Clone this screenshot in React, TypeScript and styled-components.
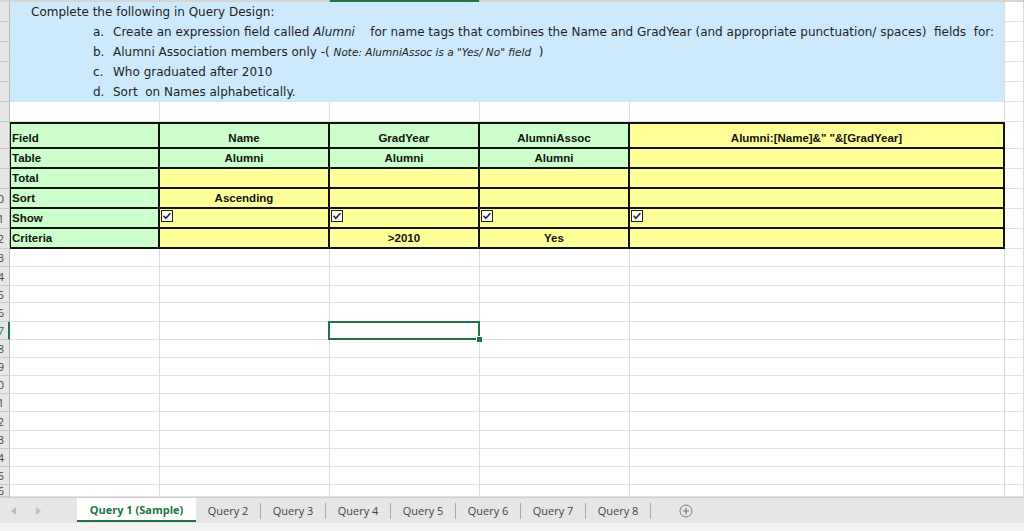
import React from 'react';
import styled, { createGlobalStyle, css } from 'styled-components';

const GRID_LINE = '#dadada';
const ROW_LINE = '#e1e1e1';
const EXCEL_GREEN = '#217346';
const INK = '#111';

// row 0 is the scrolled-away column header, rows 1..26 are sheet rows
const ROW_HEIGHTS = [2, 20, 20, 20, 20, 20, 20, 27, 20, 20, 20, 20, 20, 18, 19, 17, 19, 18, 18, 18, 18, 18, 19, 18, 18, 18, 12];
const SELECTED_ROW = 17;
const SELECTED_COL = 3;

const GlobalStyle = createGlobalStyle`
  html, body {
    margin: 0;
    padding: 0;
    background: #fff;
    overflow: hidden;
  }
  body {
    font-family: 'Liberation Sans', Arial, sans-serif;
  }
`;

const Window = styled.div`
  width: 1024px;
  height: 531px;
  display: flex;
  flex-direction: column;
  overflow: hidden;
`;

const Sheet = styled.div`
  flex: none;
  height: 497px;
  display: grid;
  grid-template-columns: 10px 150px 170px 150px 150px 375px 1fr;
  grid-template-rows: ${ROW_HEIGHTS.map((h) => `${h}px`).join(' ')};
  overflow: hidden;
`;

const ColHeader = styled.div<{ $selected?: boolean }>`
  background: ${({ $selected }) => ($selected ? EXCEL_GREEN : '#d6d6d6')};
  border-right: 1px solid #c4c4c4;
`;

const RowHeader = styled.div<{ $selected?: boolean }>`
  box-sizing: border-box;
  background: #e6e6e6;
  border-bottom: 1px solid #c9c9c9;
  border-right: ${({ $selected }) => ($selected ? `2px solid ${EXCEL_GREEN}` : '1px solid #b9b9b9')};
  display: flex;
  justify-content: flex-end;
  align-items: center;
  overflow: hidden;
  font-family: 'Open Sans', sans-serif;
  font-size: 11px;
  color: ${({ $selected }) => ($selected ? EXCEL_GREEN : '#444')};
  & span {
    margin-right: ${({ $selected }) => ($selected ? '4px' : '5px')};
    white-space: nowrap;
  }
`;

const Cell = styled.div<{ $selected?: boolean }>`
  box-sizing: border-box;
  border-right: 1px solid ${GRID_LINE};
  border-bottom: 1px solid ${ROW_LINE};
  ${({ $selected }) =>
    $selected &&
    css`
      position: relative;
      &::after {
        content: '';
        position: absolute;
        left: -2px;
        top: -1px;
        right: -1px;
        bottom: -1px;
        border: 2px solid ${EXCEL_GREEN};
      }
      &::before {
        content: '';
        position: absolute;
        right: -4px;
        bottom: -4px;
        width: 5px;
        height: 5px;
        background: ${EXCEL_GREEN};
        border: 1px solid #fff;
        z-index: 1;
      }
    `}
`;

const NoteBlock = styled.div`
  grid-column: 2 / 7;
  grid-row: 2 / span 5;
  box-sizing: border-box;
  background: #cdeafd;
  border-right: 1px solid ${GRID_LINE};
  font-family: 'DejaVu Sans', Verdana, sans-serif;
  font-size: 12px;
  color: #1e1e1e;
  display: flex;
  flex-direction: column;
`;

const NoteLine = styled.div<{ $indent: number }>`
  height: 20px;
  line-height: 20px;
  padding-left: ${({ $indent }) => $indent}px;
  white-space: pre;
`;

const Marker = styled.span`
  display: inline-block;
  width: 20px;
`;

const Em = styled.em`
  font-style: italic;
`;

const SmallNote = styled.em`
  font-style: italic;
  font-size: 10.5px;
`;

type Fill = 'green' | 'yellow';

const QueryCell = styled.div<{ $fill: Fill; $top?: boolean; $label?: boolean }>`
  box-sizing: border-box;
  background: ${({ $fill }) => ($fill === 'green' ? '#ccffcc' : '#ffff99')};
  border-right: 2px solid ${INK};
  border-bottom: 2px solid ${INK};
  border-top: ${({ $top }) => ($top ? `2px solid ${INK}` : 'none')};
  border-left: ${({ $label }) => ($label ? `1px solid ${INK}` : 'none')};
  display: flex;
  align-items: flex-end;
  justify-content: ${({ $label }) => ($label ? 'flex-start' : 'center')};
  padding: 0 0 2px ${({ $label }) => ($label ? '1px' : '0')};
  font-family: 'Liberation Sans', Arial, sans-serif;
  font-weight: bold;
  font-size: 11.5px;
  line-height: 14px;
  color: #111;
  white-space: pre;
`;

const CheckCell = styled(QueryCell)`
  align-items: flex-start;
  justify-content: flex-start;
  padding: 1px 0 0 1px;
`;

const TabBar = styled.div`
  flex: none;
  height: 26px;
  box-sizing: border-box;
  background: #e6e6e6;
  border-top: 1px solid #cdcdcd;
  display: flex;
  align-items: flex-start;
  font-family: 'Open Sans', sans-serif;
  font-size: 11px;
  color: #444;
`;

const NavArrows = styled.div`
  width: 77px;
  height: 25px;
  display: flex;
  align-items: center;
  gap: 20px;
  padding-left: 11px;
  box-sizing: border-box;
`;

const TabStrip = styled.div`
  display: flex;
  align-items: center;
  height: 25px;
`;

const ActiveTab = styled.div`
  margin-top: -1px;
  width: 119px;
  height: 24px;
  box-sizing: border-box;
  padding-top: 1px;
  background: #fff;
  border-bottom: 2px solid ${EXCEL_GREEN};
  color: ${EXCEL_GREEN};
  font-weight: bold;
  display: flex;
  align-items: center;
  justify-content: center;
`;

const Tab = styled.div`
  height: 16px;
  box-sizing: border-box;
  width: 65px;
  border-right: 1px solid #a8a8a8;
  display: flex;
  align-items: center;
  justify-content: center;
  line-height: 16px;
`;

const AddSheet = styled.div`
  width: 70px;
  display: flex;
  justify-content: center;
  align-items: center;
  height: 25px;
`;

const StatusStrip = styled.div`
  flex: 1;
  background: #f3f3f3;
`;

const Checkbox = () => (
  <svg width="12" height="12" viewBox="0 0 12 12">
    <rect x="0.5" y="0.5" width="11" height="11" fill="#fff" stroke="#222" />
    <path d="M2.6 5.8 L4.8 8.2 L9.4 3.2" fill="none" stroke="#222" strokeWidth="1.6" />
  </svg>
);

const Arrow = ({ dir }: { dir: 'left' | 'right' }) => (
  <svg width="5" height="8" viewBox="0 0 5 8">
    <path d={dir === 'left' ? 'M5 0 L0 4 L5 8 Z' : 'M0 0 L5 4 L0 8 Z'} fill="#bdbdbd" />
  </svg>
);

const PlusCircle = () => (
  <svg width="14" height="14" viewBox="0 0 14 14">
    <circle cx="7" cy="7" r="6" fill="none" stroke="#7a7a7a" strokeWidth="1" />
    <path d="M7 3.8 V10.2 M3.8 7 H10.2" stroke="#7a7a7a" strokeWidth="1.2" />
  </svg>
);

interface IQueryRow {
  label: string;
  values: string[];
  fills: Fill[];
  checks?: boolean;
}

const QUERY_ROWS: IQueryRow[] = [
  { label: 'Field', values: ['Name', 'GradYear', 'AlumniAssoc', 'Alumni:[Name]&" "&[GradYear]'], fills: ['green', 'green', 'green', 'yellow'] },
  { label: 'Table', values: ['Alumni', 'Alumni', 'Alumni', ''], fills: ['green', 'green', 'green', 'yellow'] },
  { label: 'Total', values: ['', '', '', ''], fills: ['yellow', 'yellow', 'yellow', 'yellow'] },
  { label: 'Sort', values: ['Ascending', '', '', ''], fills: ['yellow', 'yellow', 'yellow', 'yellow'] },
  { label: 'Show', values: ['', '', '', ''], fills: ['yellow', 'yellow', 'yellow', 'yellow'], checks: true },
  { label: 'Criteria', values: ['', '>2010', 'Yes', ''], fills: ['yellow', 'yellow', 'yellow', 'yellow'] },
];

const QUERY_START = 7;
const TABS = ['Query 2', 'Query 3', 'Query 4', 'Query 5', 'Query 6', 'Query 7', 'Query 8'];

const rowLabel = (n: number): string => (n >= 10 ? String(n) : '');

const App = (): JSX.Element => {
  const rows: JSX.Element[] = [];

  // scrolled column header remnant
  for (let c = 0; c < 7; c++) {
    rows.push(<ColHeader key={`h-${c}`} $selected={c === SELECTED_COL} />);
  }

  for (let r = 1; r < ROW_HEIGHTS.length; r++) {
    rows.push(
      <RowHeader key={`rh-${r}`} $selected={r === SELECTED_ROW}>
        <span>{rowLabel(r)}</span>
      </RowHeader>
    );

    if (r === 1) {
      rows.push(
        <NoteBlock key="note">
          <NoteLine $indent={21}>Complete the following in Query Design:</NoteLine>
          <NoteLine $indent={83}>
            <Marker>a.</Marker>
            {'Create an expression field called '}
            <Em>Alumni</Em>
            {'    for name tags that combines the Name and GradYear (and appropriate punctuation/ spaces)  fields  for:'}
          </NoteLine>
          <NoteLine $indent={83}>
            <Marker>b.</Marker>
            {'Alumni Association members only -( '}
            <SmallNote>Note: AlumniAssoc is a "Yes/ No" field</SmallNote>
            {'  )'}
          </NoteLine>
          <NoteLine $indent={83}>
            <Marker>c.</Marker>Who graduated after 2010
          </NoteLine>
          <NoteLine $indent={83}>
            <Marker>d.</Marker>
            {'Sort  on Names alphabetically.'}
          </NoteLine>
        </NoteBlock>
      );
    }

    const q = QUERY_ROWS[r - QUERY_START];
    if (r >= QUERY_START && q) {
      const top = r === QUERY_START;
      rows.push(
        <QueryCell key={`q-${r}-label`} $fill="green" $top={top} $label>
          {q.label}
        </QueryCell>
      );
      q.values.forEach((value, i) =>
        q.checks ? (
          rows.push(
            <CheckCell key={`q-${r}-${i}`} $fill={q.fills[i]}>
              <Checkbox />
            </CheckCell>
          )
        ) : (
          rows.push(
            <QueryCell key={`q-${r}-${i}`} $fill={q.fills[i]} $top={top}>
              {value}
            </QueryCell>
          )
        )
      );
      rows.push(<Cell key={`c-${r}-6`} />);
      continue;
    }

    const first = r <= 5 ? 6 : 1;
    for (let c = first; c < 7; c++) {
      rows.push(<Cell key={`c-${r}-${c}`} $selected={r === SELECTED_ROW && c === SELECTED_COL} />);
    }
  }

  return (
    <Window>
      <GlobalStyle />
      <Sheet>{rows}</Sheet>
      <TabBar>
        <NavArrows>
          <Arrow dir="left" />
          <Arrow dir="right" />
        </NavArrows>
        <TabStrip>
          <ActiveTab>Query 1 (Sample)</ActiveTab>
          {TABS.map((tab) => (
            <Tab key={tab}>{tab}</Tab>
          ))}
          <AddSheet>
            <PlusCircle />
          </AddSheet>
        </TabStrip>
      </TabBar>
      <StatusStrip />
    </Window>
  );
};

export default App;
